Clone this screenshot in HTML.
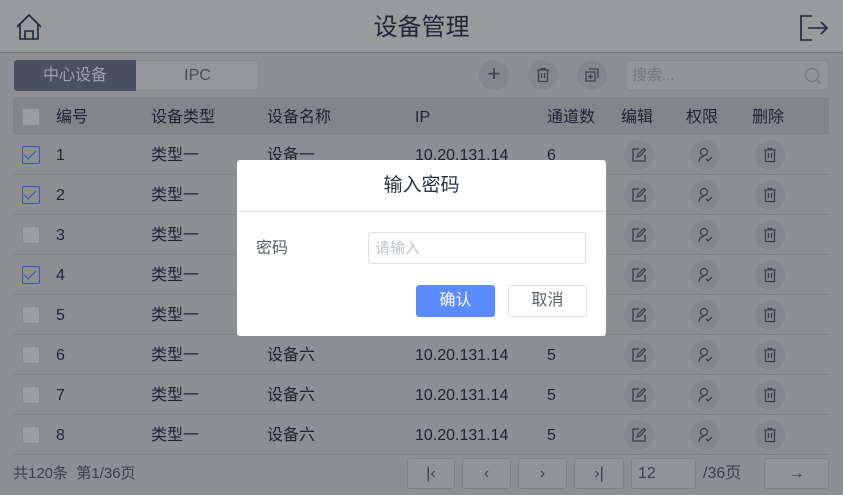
<!DOCTYPE html><html><head><meta charset="utf-8"><style>
*{box-sizing:border-box;margin:0;padding:0}
body{width:843px;height:495px;overflow:hidden;background:#8e8f93;font-family:"Liberation Sans","Noto Sans CJK SC",sans-serif;position:relative;color:#1e2330}
.a{position:absolute}
.top{left:0;top:0;width:843px;height:53px;background:#999a9c;border-bottom:1px solid #6f7176}
.title{left:0;width:843px;top:13px;line-height:30px;text-align:center;font-size:24px;color:#1e2638}
.row{left:13px;width:816px;height:40px;border-bottom:1px solid #7f8186;font-size:16px}
.row span{position:absolute;top:11px;line-height:20px;height:20px}
.cb{position:absolute;left:9px;top:11px;width:18px;height:18px;background:#9d9ea1;border:1px solid #86888c;border-radius:2px}
.cb.on{background:none;border:1.5px solid #3458c8}
.cb.on:after{content:"";position:absolute;left:4px;top:1px;width:5px;height:10px;border:solid #3458c8;border-width:0 1.5px 1.5px 0;transform:rotate(45deg)}
.ic{position:absolute;top:5px;width:30px;height:30px;border-radius:50%;background:#85878b}
.ic svg{position:absolute;left:7px;top:7px}
.pb{top:458px;height:31px;border:1px solid #7f8185;border-radius:3px;background:#929397;font-size:16px;text-align:center;line-height:29px;color:#3a3f4a}
.t{line-height:20px}
</style></head><body>
<div class="a top"></div>
<svg class="a" style="left:14px;top:12px" width="30" height="30" viewBox="0 0 30 30" fill="none" stroke="#1e2638" stroke-width="1.6"><path d="M3 15 L15 3 L27 15 M6 12 V27 H24 V12 M11 27 V19 H19 V27"/></svg>
<div class="a title">设备管理</div>
<svg class="a" style="left:799px;top:14px" width="30" height="28" viewBox="0 0 30 28" fill="none" stroke="#1e2638" stroke-width="1.6"><path d="M13 2 H2 V26 H13 M9 14 H28 M22 8 L28 14 L22 20"/></svg>
<div class="a" style="left:14px;top:60px;width:245px;height:31px;border-radius:3px;background:#959699;border:1px solid #85878b"></div>
<div class="a" style="left:14px;top:60px;width:122px;height:31px;border-radius:3px 0 0 3px;background:#4a5060;color:#9ea3ad;font-size:16px;text-align:center;line-height:31px">中心设备</div>
<div class="a" style="left:136px;top:60px;width:123px;height:31px;color:#4a4d55;font-size:16px;text-align:center;line-height:31px">IPC</div>
<div class="a" style="left:479px;top:60px;width:30px;height:30px;border-radius:50%;background:#85878b;color:#3a3f4a;text-align:center;line-height:28px;font-size:22px">+</div>
<div class="a" style="left:528px;top:60px;width:30px;height:30px;border-radius:50%;background:#85878b"><svg style="position:absolute;left:7px;top:7px" width="16" height="16" viewBox="0 0 16 16" fill="none" stroke="#3a3f4a" stroke-width="1.3"><path d="M2 3H14M6 3V1.5H10V3M3.5 3V14.5H12.5V3M6.5 6V11M9.5 6V11"/></svg></div>
<div class="a" style="left:577px;top:60px;width:30px;height:30px;border-radius:50%;background:#85878b"><svg style="position:absolute;left:7px;top:7px" width="16" height="16" viewBox="0 0 16 16" fill="none" stroke="#3a3f4a" stroke-width="1.3"><path d="M5 2H14V11M2 5H11V14H2Z M6.5 7V12M4 9.5H9"/></svg></div>
<div class="a" style="left:625px;top:60px;width:204px;height:31px;border:1px solid #85878b;border-radius:4px;background:#939497;color:#75777c;font-size:15px;line-height:20px;padding:5px 0 0 6px">搜索...<svg style="position:absolute;right:6px;top:6px" width="18" height="18" viewBox="0 0 18 18" fill="none" stroke="#75777c" stroke-width="1.3"><circle cx="8" cy="8" r="6.5"/><path d="M13 13L17 17"/></svg></div>
<div class="a" style="left:13px;top:97px;width:816px;height:38px;background:#838589"></div>
<div class="a row" style="top:97px;height:38px;border:none"><div class="cb"></div><span style="left:43px">编号</span><span style="left:138px">设备类型</span><span style="left:254px">设备名称</span><span style="left:402px">IP</span><span style="left:534px">通道数</span><span style="left:608px">编辑</span><span style="left:673px">权限</span><span style="left:739px">删除</span></div>
<div id="rows"></div>
<script>
var on=[1,1,0,1,0,0,0,0],names=["设备一","","","","","设备六","设备六","设备六"],ch=["6","","","","","5","5","5"],ips=["10.20.131.14","","","","","10.20.131.14","10.20.131.14","10.20.131.14"];
var h="";
var ed='<svg width="16" height="16" viewBox="0 0 16 16" fill="none" stroke="#3a3f4a" stroke-width="1.3"><path d="M8 2H2V14H14V8M6 10L7 7L13 1.5L14.5 3L9 9Z"/></svg>';
var pe='<svg width="16" height="16" viewBox="0 0 16 16" fill="none" stroke="#3a3f4a" stroke-width="1.3"><circle cx="7" cy="5" r="3.5"/><path d="M2 15C2 11 4 9.5 7 9.5M9 12L11 14L15 10"/></svg>';
var de='<svg width="16" height="16" viewBox="0 0 16 16" fill="none" stroke="#3a3f4a" stroke-width="1.3"><path d="M2 3H14M6 3V1.5H10V3M3.5 3V14.5H12.5V3M6.5 6V11M9.5 6V11"/></svg>';
for(var i=0;i<8;i++){var t=135+i*40;
h+='<div class="a row" style="top:'+t+'px"><div class="cb'+(on[i]?' on':'')+'"></div><span style="left:43px">'+(i+1)+'</span><span style="left:138px">类型一</span><span style="left:254px">'+names[i]+'</span><span style="left:402px">'+ips[i]+'</span><span style="left:534px">'+ch[i]+'</span><div class="ic" style="left:611px">'+ed+'</div><div class="ic" style="left:677px">'+pe+'</div><div class="ic" style="left:742px">'+de+'</div></div>';}
document.getElementById("rows").innerHTML=h;
</script>
<div class="a t" style="left:13px;top:464px;font-size:15px;color:#3a3f4a">共120条&nbsp; 第1/36页</div>
<div class="a pb" style="left:407px;width:48px">|‹</div>
<div class="a pb" style="left:462px;width:49px">‹</div>
<div class="a pb" style="left:518px;width:49px">›</div>
<div class="a pb" style="left:574px;width:50px">›|</div>
<div class="a pb" style="left:631px;width:65px;text-align:left;padding-left:6px">12</div>
<div class="a t" style="left:703px;top:464px;font-size:16px;color:#3a3f4a">/36页</div>
<div class="a pb" style="left:764px;width:65px">→</div>
<div class="a" style="left:237px;top:160px;width:369px;height:176px;background:#fff;border-radius:3px"></div>
<div class="a" style="left:237px;top:173px;line-height:26px;width:369px;text-align:center;font-size:19px;color:#2a3142">输入密码</div>
<div class="a" style="left:237px;top:211px;width:369px;height:1px;background:#dde0e6"></div>
<div class="a t" style="left:256px;top:239px;font-size:16px;color:#5a606c">密码</div>
<div class="a" style="left:368px;top:232px;width:218px;height:32px;border:1px solid #dcdfe6;border-radius:3px;color:#c0c4cc;font-size:15px;line-height:20px;padding:6px 0 0 6px">请输入</div>
<div class="a" style="left:416px;top:285px;width:79px;height:32px;background:#5b8cff;border-radius:3px;color:#fff;font-size:16px;text-align:center;line-height:32px">确认</div>
<div class="a" style="left:508px;top:285px;width:79px;height:32px;border:1px solid #dcdfe6;border-radius:3px;color:#5a606c;font-size:16px;text-align:center;line-height:30px">取消</div>
</body></html>
